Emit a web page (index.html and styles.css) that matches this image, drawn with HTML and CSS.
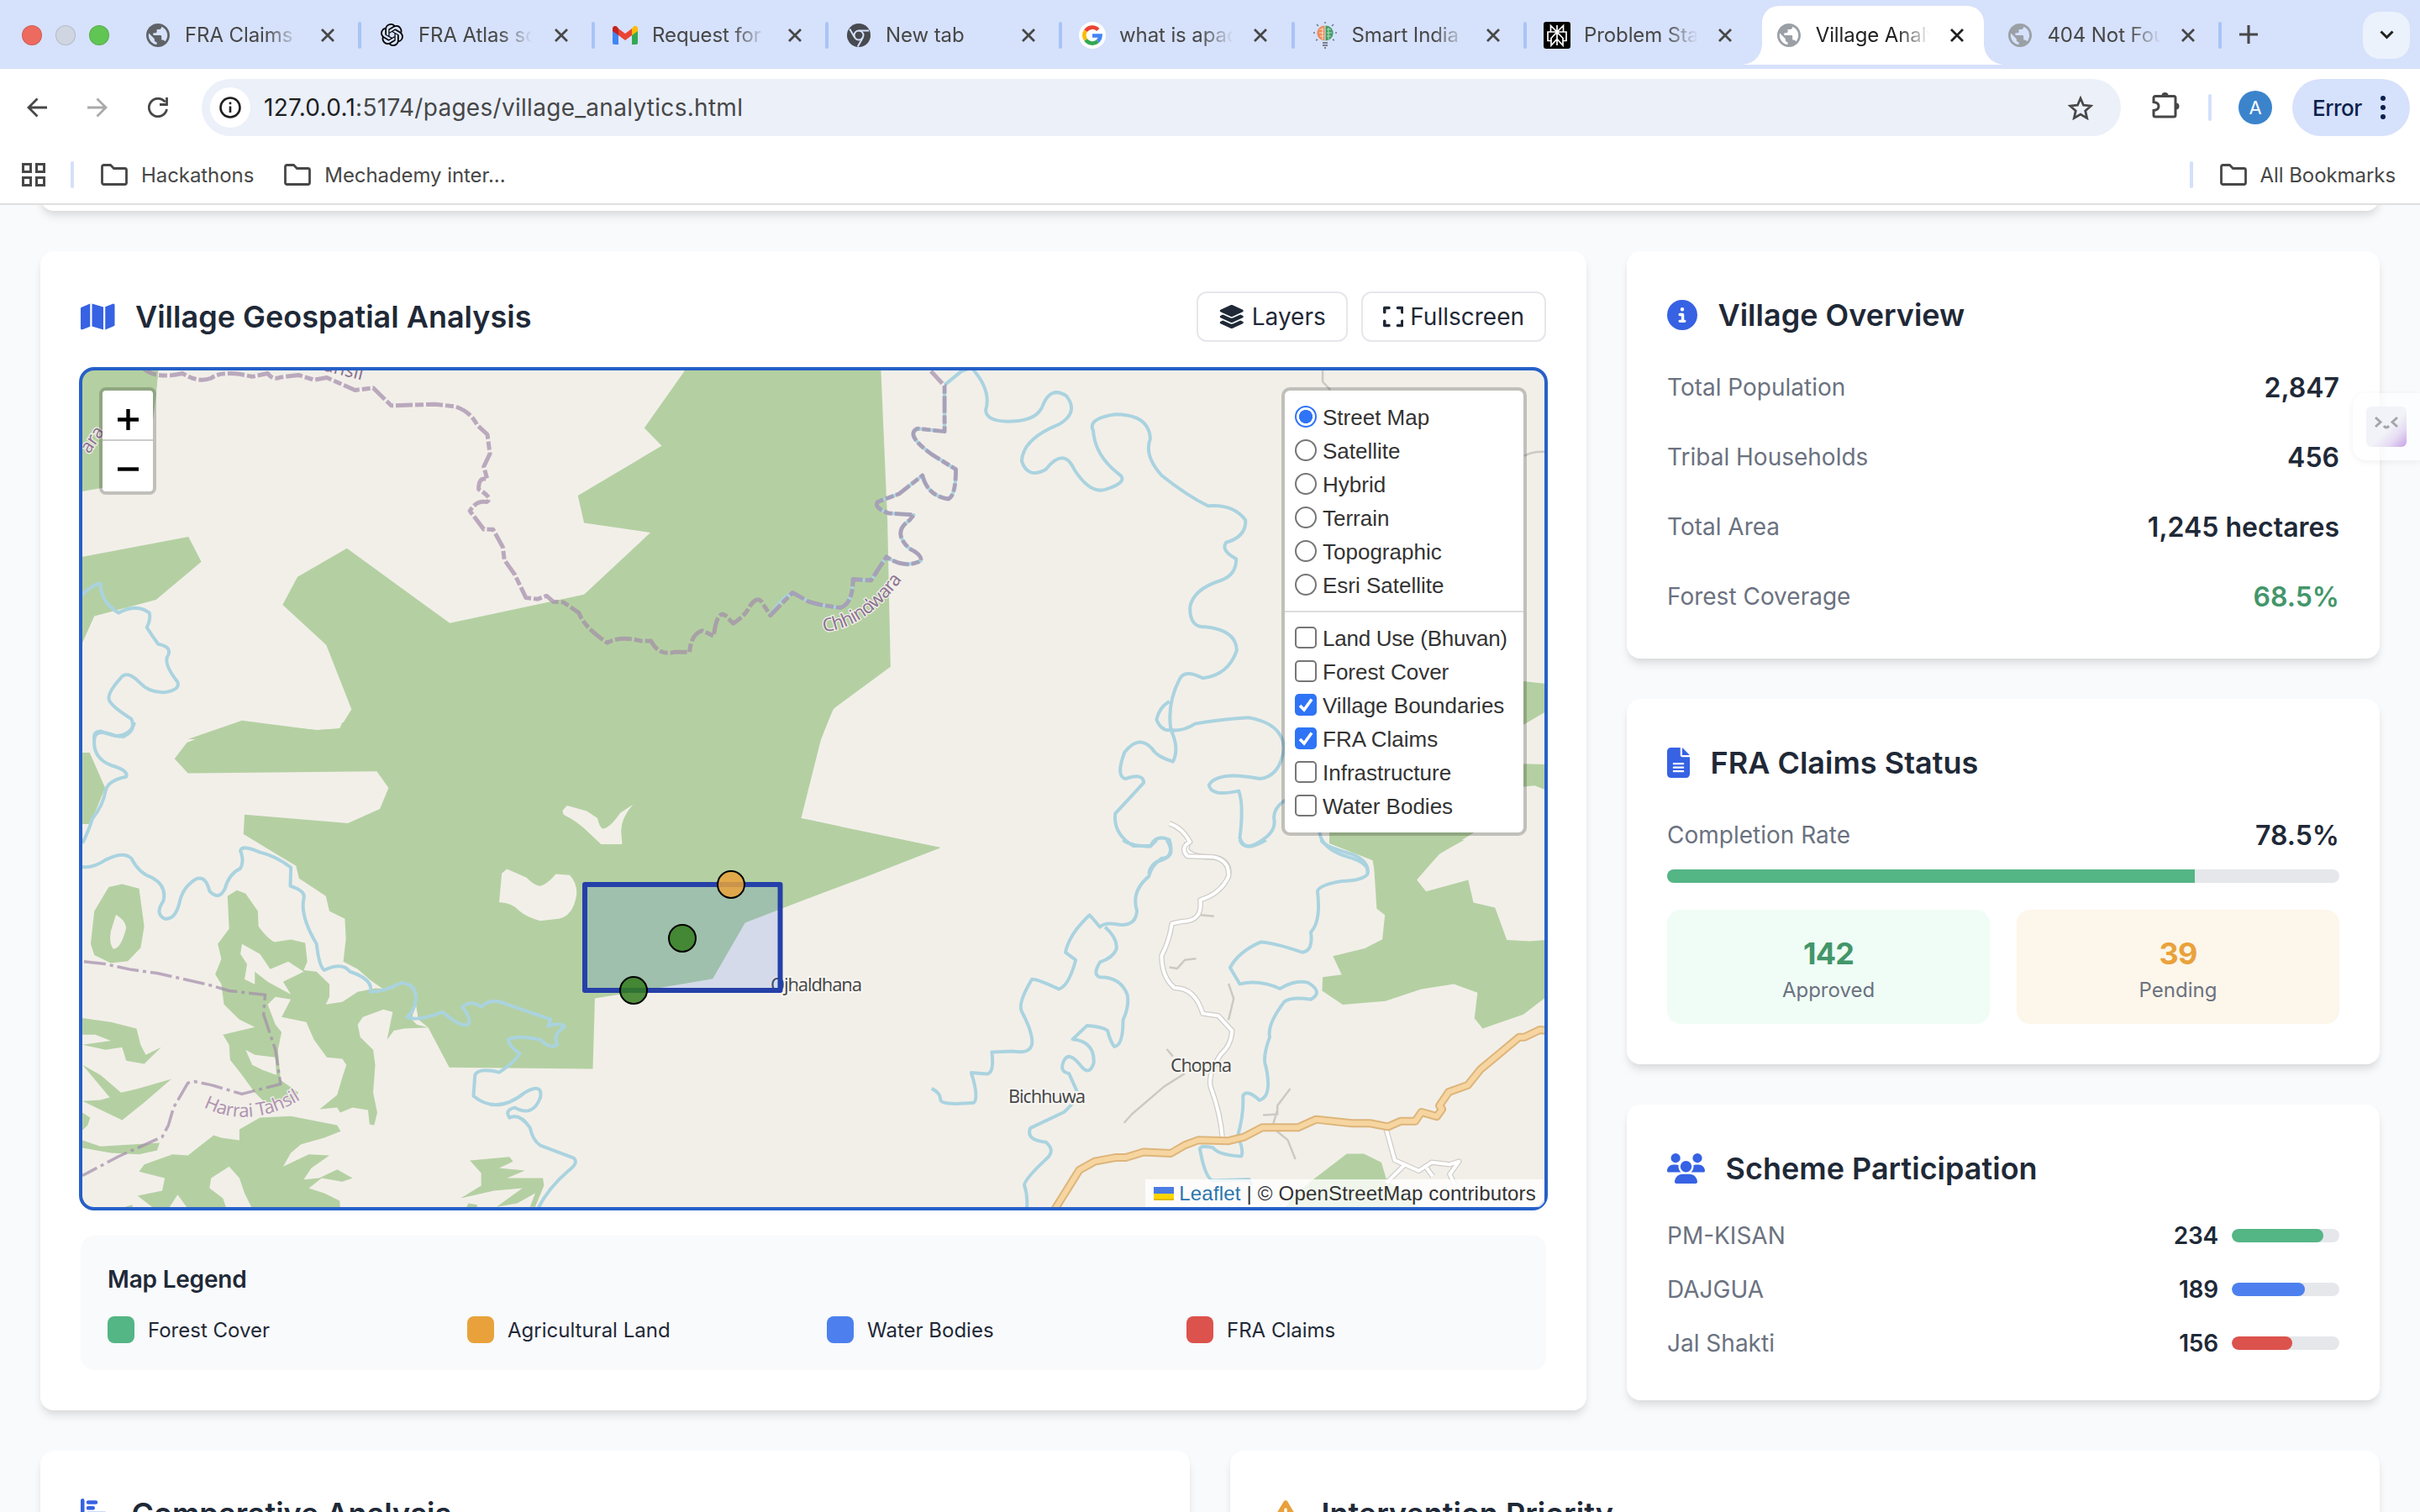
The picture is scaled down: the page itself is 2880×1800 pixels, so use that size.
FILE: index.html
```html
<!DOCTYPE html>
<html lang="en">
<head>
<meta charset="utf-8">
<title>Village Analytics</title>
<link rel="stylesheet" href="styles.css">
</head>
<body>
<svg class="defs" width="0" height="0" aria-hidden="true">
  <symbol id="globe" viewBox="2 2 20 20"><path d="M12 2C6.48 2 2 6.48 2 12s4.48 10 10 10 10-4.48 10-10S17.52 2 12 2zm-1 17.93c-3.95-.49-7-3.85-7-7.93 0-.62.08-1.21.21-1.79L9 15v1c0 1.1.9 2 2 2v1.93zm6.9-2.54c-.26-.81-1-1.39-1.9-1.39h-1v-3c0-.55-.45-1-1-1H8v-2h2c.55 0 1-.45 1-1V7h2c1.1 0 2-.9 2-2v-.41c2.93 1.19 5 4.06 5 7.41 0 2.08-.8 3.97-2.1 5.39z"/></symbol>
  <symbol id="close" viewBox="0 0 16 16"><path d="M1 1 15 15M15 1 1 15" fill="none" stroke="currentColor" stroke-width="2.8"/></symbol>
  <symbol id="folder" viewBox="0 0 32 26"><path d="M1.500 3.500a2 2 0 0 1 2-2h8l4 4h13a2 2 0 0 1 2 2v15a2 2 0 0 1-2 2h-25a2 2 0 0 1-2-2z" fill="none" stroke="currentColor" stroke-width="2.800"/></symbol>
</svg>

<header class="browser">
  <div class="tabstrip">
    <div class="lights"><i class="red"></i><i class="gray"></i><i class="green"></i></div>
    <div class="tab sep"><span class="fav"><svg class="globe" width="28" height="28"><use href="#globe"/></svg></span><span class="name">FRA Claims Status</span><svg class="x"><use href="#close"/></svg></div>
    <div class="tab sep"><span class="fav"><svg width="27" height="27" viewBox="0 0 24 24"><path d="M22.2819 9.8211a5.9847 5.9847 0 0 0-.5157-4.9108 6.0462 6.0462 0 0 0-6.5098-2.9A6.0651 6.0651 0 0 0 4.9807 4.1818a5.9847 5.9847 0 0 0-3.9977 2.9 6.0462 6.0462 0 0 0 .7427 7.0966 5.98 5.98 0 0 0 .511 4.9107 6.051 6.051 0 0 0 6.5146 2.9001A5.9847 5.9847 0 0 0 13.2599 24a6.0557 6.0557 0 0 0 5.7718-4.2058 5.9894 5.9894 0 0 0 3.9977-2.9001 6.0557 6.0557 0 0 0-.7475-7.0729zm-9.022 12.6081a4.4755 4.4755 0 0 1-2.8764-1.0408l.1419-.0804 4.7783-2.7582a.7948.7948 0 0 0 .3927-.6813v-6.7369l2.02 1.1686a.071.071 0 0 1 .038.052v5.5826a4.504 4.504 0 0 1-4.4945 4.4944zm-9.6607-4.1254a4.4708 4.4708 0 0 1-.5346-3.0137l.142.0852 4.783 2.7582a.7712.7712 0 0 0 .7806 0l5.8428-3.3685v2.3324a.0804.0804 0 0 1-.0332.0615L9.74 19.9502a4.4992 4.4992 0 0 1-6.1408-1.6464zM2.3408 7.8956a4.485 4.485 0 0 1 2.3655-1.9728V11.6a.7664.7664 0 0 0 .3879.6765l5.8144 3.3543-2.0201 1.1685a.0757.0757 0 0 1-.071 0l-4.8303-2.7865A4.504 4.504 0 0 1 2.3408 7.872zm16.5963 3.8558L13.1038 8.364 15.1192 7.2a.0757.0757 0 0 1 .071 0l4.8303 2.7913a4.4944 4.4944 0 0 1-.6765 8.1042v-5.6772a.79.79 0 0 0-.407-.667zm2.0107-3.0231l-.142-.0852-4.7735-2.7818a.7759.7759 0 0 0-.7854 0L9.409 9.2297V6.8974a.0662.0662 0 0 1 .0284-.0615l4.8303-2.7866a4.4992 4.4992 0 0 1 6.6802 4.66zM8.3065 12.863l-2.02-1.1638a.0804.0804 0 0 1-.038-.0567V6.0742a4.4992 4.4992 0 0 1 7.3757-3.4537l-.142.0805L8.704 5.459a.7948.7948 0 0 0-.3927.6813zm1.0976-2.3654l2.602-1.4998 2.6069 1.4998v2.9994l-2.5974 1.4997-2.6067-1.4997Z"/></svg></span><span class="name">FRA Atlas solution</span><svg class="x"><use href="#close"/></svg></div>
    <div class="tab sep"><span class="fav"><svg width="30" height="22" viewBox="0 0 30 22"><path d="M0 3v17a2 2 0 0 0 2 2h5V8z" fill="#4285f4"/><path d="M30 3v17a2 2 0 0 1-2 2h-5V8z" fill="#34a853"/><path d="M23 3v8l7-5V3c0-3-3.500-4-5.500-2z" fill="#fbbc04"/><path d="M7 11V3l8 6 8-6v8l-8 6z" fill="#ea4335"/><path d="M0 3v3l7 5V3L5.500 1C3.500-1 0 0 0 3z" fill="#c5221f"/></svg></span><span class="name">Request for access</span><svg class="x"><use href="#close"/></svg></div>
    <div class="tab sep"><span class="fav"><svg width="28" height="28" viewBox="0 0 28 28"><circle cx="14" cy="14" r="14" fill="#474a4f"/><circle cx="14" cy="14" r="5.500" fill="none" stroke="#d6e1fb" stroke-width="2"/><path d="M14 8.500H26M9.200 16.800 3.200 6.500M18.800 16.800 12.800 27.500" stroke="#d6e1fb" stroke-width="2"/></svg></span><span class="name">New tab</span><svg class="x"><use href="#close"/></svg></div>
    <div class="tab sep narrow"><span class="fav"><svg width="32" height="32" viewBox="0 0 32 32"><circle cx="16" cy="16" r="16" fill="#fff"/><g fill="none" stroke-width="4.600"><path d="M8 10.800A9.500 9.500 0 0 1 22.800 9.500" stroke="#ea4335"/><path d="M8.200 21.500A9.500 9.500 0 0 1 8 10.800" stroke="#fbbc04"/><path d="M22.500 23A9.500 9.500 0 0 1 8.200 21.500" stroke="#34a853"/><path d="M16 16.500H25.500A9.500 9.500 0 0 1 22.500 23" stroke="#4285f4"/></g></svg></span><span class="name">what is apache kafka</span><svg class="x"><use href="#close"/></svg></div>
    <div class="tab sep narrow"><span class="fav"><svg width="30" height="32" viewBox="0 0 30 32"><path d="M14.500 4.500v18C8 22 5 17 5.500 12 6 8 10 4.500 14.500 4.500z" fill="#ee8c5a"/><path d="M15.500 4.500v18C22 22 25 17 24.500 12 24 8 20 4.500 15.500 4.500z" fill="#3f9d62"/><path d="M8.500 9h4M8 13h5M9 17h4M12 7v14" stroke="#fbe3d2" stroke-width="1"/><path d="M17 9h5M17 13h6M17 17h5M19 7v14" stroke="#b6dcc4" stroke-width="1"/><path d="M12 25h6M12 28h6M14 31h2" stroke="#777f8c" stroke-width="2"/><path d="M15 0v2M5 3l2 2M25 3l-2 2M1 13h2M27 13h2M4 22l2-1M26 22l-2-1" stroke="#6a7890" stroke-width="1.500"/></svg></span><span class="name">Smart India Hack</span><svg class="x"><use href="#close"/></svg></div>
    <div class="tab narrow2"><span class="fav"><svg width="32" height="32" viewBox="0 0 32 32"><rect width="32" height="32" rx="3"/><path d="M16 4v24M8.500 4.500l7.500 7.500 7.500-7.500V12h3.500v10.500h-4V28L16 20.500 9 28v-5.500H5V12h3.500zM16 12l-7 7.500V26M16 12l7 7.500V26M8.500 12h15" fill="none" stroke="#fff" stroke-width="1.700"/></svg></span><span class="name">Problem Statement</span><svg class="x"><use href="#close"/></svg></div>
    <div class="tab active narrow2"><span class="fav"><svg class="globe light" width="28" height="28"><use href="#globe"/></svg></span><span class="name">Village Analytics</span><svg class="x"><use href="#close"/></svg></div>
    <div class="tab sep narrow2"><span class="fav"><svg class="globe light" width="28" height="28"><use href="#globe"/></svg></span><span class="name">404 Not Found</span><svg class="x"><use href="#close"/></svg></div>
    <svg class="plus" viewBox="0 0 20 20"><path d="M10 0V20M0 10H20" stroke="currentColor" stroke-width="2.800"/></svg>
    <div class="tabsearch"><svg width="17" height="11" viewBox="0 0 17 11"><path d="M1.500 1.500 8.500 8.500 15.500 1.500" fill="none" stroke="#1f1f1f" stroke-width="3"/></svg></div>
  </div>

  <div class="toolbar">
    <svg class="nav back" viewBox="0 0 24 24"><path d="M24 12H2M12.500 1.500 2 12 12.500 22.500" fill="none" stroke="currentColor" stroke-width="2.800"/></svg>
    <svg class="nav fwd" viewBox="0 0 24 24"><path d="M0 12H22M11.500 1.500 22 12 11.500 22.500" fill="none" stroke="currentColor" stroke-width="2.800"/></svg>
    <svg class="nav" viewBox="0 0 24 24"><path d="M22.500 14A10.700 10.700 0 1 1 20.500 5.500M22.500 0V8.500H14" fill="none" stroke="currentColor" stroke-width="2.800"/></svg>
    <div class="omnibox">
      <span class="siteinfo"><svg width="26" height="26" viewBox="0 0 26 26"><circle cx="13" cy="13" r="11.500" fill="none" stroke="#1f1f1f" stroke-width="2.600"/><path d="M13 11.500V19M13 6.500V9.300" stroke="#1f1f1f" stroke-width="2.600"/></svg></span>
      <span class="url"><b>127.0.0.1</b>:5174/pages/village_analytics.html</span>
      <svg class="star" width="30" height="29" viewBox="0 0 30 29"><path d="M15 3l3.500 8.200 8.900.8-6.700 5.900 2 8.700L15 22l-7.700 4.600 2-8.700L2.600 12l8.900-.8z" fill="none" stroke="#474747" stroke-width="2.700"/></svg>
    </div>
    <svg class="ext" width="34" height="34" viewBox="0 0 34 34"><path d="M4 6.500H26a2 2 0 0 1 2 2V29a2 2 0 0 1-2 2H4a2 2 0 0 1-2-2V23.500C7 23 8 20.500 8 18.500S7 14 2 13.500V8.500a2 2 0 0 1 2-2z" fill="none" stroke="#474747" stroke-width="3"/><path d="M11.500 6a4 4 0 0 1 8 0zM28.500 14.500a4 4 0 0 1 0 8z" fill="#474747"/></svg>
    <i class="vbar"></i>
    <span class="avatar">A</span>
    <span class="errorpill">Error<svg width="6" height="28" viewBox="0 0 6 28"><circle cx="3" cy="3" r="3"/><circle cx="3" cy="14" r="3"/><circle cx="3" cy="25" r="3"/></svg></span>
  </div>

  <div class="bookmarks">
    <svg class="apps" width="28" height="28" viewBox="0 0 28 28"><path d="M1.500 1.500h9v9h-9zM17.500 1.500h9v9h-9zM1.500 17.500h9v9h-9zM17.500 17.500h9v9h-9z" fill="none" stroke="#474747" stroke-width="3"/></svg>
    <i class="vbar"></i>
    <svg class="folder"><use href="#folder"/></svg><span class="bm first">Hackathons</span>
    <svg class="folder"><use href="#folder"/></svg><span class="bm">Mechademy inter...</span>
    <i class="vbar right"></i>
    <svg class="folder"><use href="#folder"/></svg><span class="bm all">All Bookmarks</span>
  </div>
</header>

<main class="page">
  <div class="card previous"></div>
  <div class="row top">
    <section class="card mapcard">
      <div class="maphead">
        <h3><svg class="ico" viewBox="0 0 576 512"><path d="M384 476.1L192 421.2V35.9L384 90.8V476.1zm32-1.2V88.4L543.1 37.5c15.8-6.3 32.9 5.3 32.9 22.3V394.6c0 9.8-6 18.6-15.1 22.3L416 474.8zM15.1 95.1L160 37.2V423.6L32.9 474.5C17.1 480.8 0 469.2 0 452.2V117.4c0-9.8 6-18.6 15.1-22.3z"/></svg>Village Geospatial Analysis</h3>
        <button class="btn"><svg viewBox="0 0 576 512"><path d="M264.500 5.200c14.900-6.900 32.100-6.900 47 0l218.600 101c8.500 3.900 13.900 12.400 13.900 21.800s-5.400 17.900-13.900 21.800l-218.600 101c-14.900 6.900-32.100 6.900-47 0L45.900 149.800C37.400 145.800 32 137.300 32 128s5.400-17.900 13.900-21.800L264.500 5.200zM476.900 209.600l53.200 24.600c8.500 3.900 13.900 12.400 13.900 21.800s-5.400 17.900-13.900 21.800l-218.600 101c-14.900 6.900-32.100 6.900-47 0L45.900 277.800C37.400 273.800 32 265.300 32 256s5.400-17.900 13.900-21.800l53.200-24.600 152 70.200c23.400 10.800 50.400 10.800 73.800 0l152-70.200zm-152 198.200l152-70.200 53.200 24.600c8.500 3.900 13.900 12.400 13.900 21.800s-5.400 17.900-13.900 21.800l-218.600 101c-14.900 6.900-32.100 6.900-47 0L45.900 405.800C37.400 401.800 32 393.300 32 384s5.400-17.900 13.900-21.800l53.200-24.600 152 70.200c23.400 10.800 50.400 10.800 73.800 0z"/></svg>Layers</button>
        <button class="btn"><svg viewBox="0 0 448 512"><path d="M32 32C14.300 32 0 46.300 0 64v96c0 17.700 14.300 32 32 32s32-14.300 32-32V96h64c17.700 0 32-14.300 32-32s-14.300-32-32-32H32zM64 352c0-17.700-14.300-32-32-32s-32 14.300-32 32v96c0 17.700 14.300 32 32 32h96c17.700 0 32-14.300 32-32s-14.300-32-32-32H64V352zM320 32c-17.700 0-32 14.300-32 32s14.300 32 32 32h64v64c0 17.700 14.300 32 32 32s32-14.300 32-32V64c0-17.700-14.300-32-32-32H320zM448 352c0-17.700-14.300-32-32-32s-32 14.300-32 32v64H320c-17.700 0-32 14.300-32 32s14.300 32 32 32h96c17.700 0 32-14.300 32-32V352z"/></svg>Fullscreen</button>
      </div>

      <div class="map">
        <svg class="canvas" viewBox="96 439 1744 1000">
          <rect x="96" y="439" width="1744" height="1000" fill="#f2efe9"/>
          <!-- south-west tile -->
          <svg x="40" y="860" width="960" height="940" viewBox="0 0 1568 1568" preserveAspectRatio="none">
            <g class="forest">
              <path fill-rule="evenodd" d="M400 0 298 40 274 72 300 101 667 97 690 130 673 172 611 200 410 183 408 222 510 285 516 310 568 345 575 375 605 390 607 430 602 475 630 490 655 512 680 530 738 530 748 590 767 606 808 685 1087 688 1091 548 1200 530 1320 509 1383 398 1568 325V207L1492 190 1530 35 1543 0H600L595 13 550 15ZM1028 175 1037 165 1075 176 1096 190Q1100 208 1106 211 1120 210 1140 180L1165 163Q1142 190 1142 215L1144 242H1103L1082 222Q1060 198 1030 183ZM920 291 958 308Q975 325 985 325 1000 320 1015 301L1042 303Q1058 320 1055 345 1048 385 1020 390L985 394Q960 388 945 375 930 358 905 357L910 300Z"/>
              <path d="M95 60H109L139 130 110 202H95Z"/>
              <path fill-rule="evenodd" d="M146 327 172 321 205 330 215 405 208 448 183 474 150 478 118 462 111 440 118 375ZM160 382Q178 392 180 408 170 450 155 450 146 440 150 415Z"/>
              <path fill-rule="evenodd" d="M377 345 395 333 412 340 436 375 437 405Q455 430 468 436L500 431 528 438 532 475 525 492 550 495 575 520 575 545 568 560 600 555 630 535 665 528 700 530 735 520 745 545 735 590 745 600 767 606 720 608 700 612 687 630 695 590 698 575 680 570 640 585 630 600 635 625 660 650 664 680 660 735 668 775 662 800 653 798 650 770 620 765 596 775 590 765 556 768 590 740 600 705 608 680 600 668 570 665 545 630 530 595 482 585 500 550 470 545 455 560 470 600 482 615 475 650 480 710 515 735 500 755 450 755 430 735 405 700 382 670 380 640 368 620 430 605 400 590 370 560 365 520 353 500 365 470 358 440 380 410ZM405 440 440 460 460 490 495 475 525 495 485 515 500 540 455 515 430 495 430 520 410 510 415 480 402 460ZM412 650 430 660 470 665 472 700 445 690 425 680Z"/>
              <path d="M95 587 150 595 200 608 208 640 218 660 248 645 215 678 180 672 172 645 140 650 95 640 150 632 120 620 95 620Z"/>
              <path d="M95 680 130 700 170 735 200 728 268 708 215 755 172 790 95 752 130 750 148 745Z"/><path d="M95 775 110 785 105 800 95 810Z"/><path d="M95 830 130 842 245 835 240 850 205 858 150 855 95 845Z"/>
              <path d="M440 785 500 782 590 800 597 812 565 825 520 838 500 855 485 882 535 858 575 860 540 885 525 908 555 905 590 888 620 905 600 912 560 905 535 925 565 935 595 950 596 966H425L410 935 400 905 380 882 345 905 342 925 368 945 375 966H300L280 938 262 966H235L202 940 250 930 255 905 205 892 215 878 270 858 300 860 350 820 365 825 400 830 400 808Z"/>
              <path d="M848 870 925 863 932 872 905 885 955 890 920 905 990 905 992 920 975 962 965 962 975 935 940 955 900 962 950 925 895 930 830 945 870 920 870 895Z"/><path d="M178 962 192 958V966ZM845 955 862 958V966H840Z"/>
            </g>
            <g class="river">
              <path d="M196 0Q190 25 160 27 118 10 118 35 115 70 150 85 185 95 180 108 145 115 140 135 135 165 115 190 105 220 95 240"/>
              <path d="M95 287Q115 290 140 273 175 255 190 270 205 300 230 308 260 325 252 355 235 380 255 390 275 392 283 360 290 325 318 310 335 305 342 335 360 355 372 330 380 300 402 290 410 275 402 255 405 242 440 258 470 265 500 288L499 325Q530 335 525 350 518 385 550 440 555 485 565 492 600 475 615 495 660 510 655 535 680 535 715 517 745 520 743 550 740 575 726 585 745 595 795 575 835 610 846 598 850 585 833 565 850 550 870 565 890 545 920 560L1005 590 1000 603Q1030 595 1032 605 1008 618 1018 640 1005 650 985 630 940 620 922 630 925 645 945 657 935 675 905 695 865 685 858 700L855 742Q900 780 955 735 990 715 985 745 970 785 935 765 915 770 925 785 945 775 965 805 970 830 985 840L1050 865Q1060 875 1040 890 1000 925 980 966"/>
            </g>
            <path class="tahsil" d="M98 475 135 479 190 491 240 498 340 521 380 533 450 541 447 580 470 650 480 718 405 738 345 720 312 713 300 716 272 765 262 800 250 823 165 862 95 900"/>
          </svg>
          <!-- south-east tile -->
          <svg x="960" y="1000" width="960" height="800" viewBox="0 0 1568 1568" preserveAspectRatio="none">
            <g class="forest">
              <path d="M185 0 260 18 120 84 0 137V0Z"/>
              <path d="M1016 0V8L1102 48 1108 160 1124 175 1119 232 1085 253 1023 271 1040 314 1003 320 1002 352 1042 384 1125 376 1195 348 1258 336 1304 356 1298 416 1314 440 1393 407 1440 364V233L1405 236 1361 233 1338 158 1296 146 1286 93 1204 120 1186 93 1230 32 1278 0Z"/>
              <path d="M930 857 960 815 1050 732H1083L1117 752 1127 792 1190 857Z"/>
            </g>
            <g class="river">
              <path d="M615 0Q630 15 668 15L680 0M700 0Q720 40 690 43 670 60 665 85 630 120 642 165 640 200 610 198 580 190 570 203L550 175Q510 220 503 262L523 280Q510 340 490 348 450 325 438 325 410 380 418 400 440 450 438 475 435 500 400 493L360 495Q365 545 350 546L320 543Q335 600 325 613 260 620 260 605 260 590 243 580"/>
              <path d="M580 203Q605 230 602 255 595 275 570 285 555 315 570 320 610 320 623 360 628 385 615 420 615 480 598 482 590 470 585 445 575 435 545 433L517 465Q560 470 558 520 550 550 535 530 510 490 500 515 490 540 510 545L525 585Q525 610 500 635L435 672Q425 700 465 705 485 725 465 745 425 790 423 805 430 830 428 857"/>
              <path d="M842 0Q850 30 893 0M1000 0Q1005 15 1060 33 1095 50 1090 80 1080 95 1040 96 995 105 993 120 1000 190 980 215 985 260 963 262 910 240 883 238 840 260 823 298L842 336Q880 325 920 347 950 325 975 333 1005 355 980 372 940 365 928 378 895 430 900 460 885 510 893 530 905 600 880 607 855 580 848 597 850 640 838 690 850 725 845 738 800 735 790 718 760 710 765 725 775 790 790 795L860 792 865 805"/>
            </g>
            <path class="track" d="M765 175 792 178M705 297 720 300 735 280 757 277M820 335 830 370 820 420M700 488 712 505M617 660 632 640 695 575 735 545M940 580 915 620 915 640 887 642M915 630 905 670 935 700 950 745"/>
            <g id="minor-roads">
              <path class="casing" d="M735 0Q745 5 738 20 745 40 790 40 825 45 820 85 805 125 765 140 770 190 730 190L710 195Q705 235 690 270 690 320 715 345 755 345 770 405L800 410 827 445Q825 480 805 500 780 545 785 575 805 640 808 695M1125 668 1143 747 1190 772 1215 752 1250 757 1268 750 1250 780 1260 805M1163 757 1127 800M1205 765 1217 785"/>
              <path class="road" d="M735 0Q745 5 738 20 745 40 790 40 825 45 820 85 805 125 765 140 770 190 730 190L710 195Q705 235 690 270 690 320 715 345 755 345 770 405L800 410 827 445Q825 480 805 500 780 545 785 575 805 640 808 695M1125 668 1143 747 1190 772 1215 752 1250 757 1268 750 1250 780 1260 805M1163 757 1127 800M1205 765 1217 785"/>
            </g>
            <path class="hw casing2" d="M482 862 530 770 560 750 600 741 620 741 655 728 708 731 735 712 762 700 820 702 850 693 885 671 955 671 990 652 1060 661 1095 661 1130 669 1155 656 1183 656 1195 635 1225 645 1235 628 1230 620 1248 588 1285 572 1310 535 1385 460 1395 460 1425 443 1440 445"/>
            <path class="hw" d="M482 862 530 770 560 750 600 741 620 741 655 728 708 731 735 712 762 700 820 702 850 693 885 671 955 671 990 652 1060 661 1095 661 1130 669 1155 656 1183 656 1195 635 1225 645 1235 628 1230 620 1248 588 1285 572 1310 535 1385 460 1395 460 1425 443 1440 445"/>
          </svg>
          <!-- north-west tile -->
          <svg x="40" y="280" width="960" height="600" viewBox="0 0 1568 1568" preserveAspectRatio="none">
            <g class="forest">
              <path d="M90 410H243L238 500 230 600 200 760 130 787 90 798Z"/>
              <path d="M90 1002 301 938 326 1016 238 1134 118 1185 90 1285Z"/>
              <path d="M1268 410 1264 425 1187 600 1221 655 1058 810 1070 895 1199 925 1070 1118 809 1207 609 974 513 1063 484 1150 569 1275 618 1475 595 1534 550 1540 405 1510 300 1568H1530L1553 1480 1568 1440V410Z"/>
            </g>
            <path class="river" d="M90 1125Q115 1085 130 1083 130 1140 165 1175 200 1145 225 1175 228 1195 220 1220 232 1250 242 1272 268 1280 262 1305 250 1330 280 1390 285 1415 255 1422 225 1425 205 1390 180 1350 168 1380 140 1430 148 1450 155 1470 190 1505 200 1540 175 1560 155 1560 130 1543 115 1545 118 1568M1432 1183Q1450 1135 1475 1112L1510 1143 1540 1145 1568 1160"/>
            <path class="district" d="M210 410Q235 450 290 430 320 460 345 445 360 425 400 432L425 440 455 430Q465 452 480 442L515 435 545 450 570 443 625 482 660 475 695 530 780 526 820 533Q850 550 862 590L882 620 887 680 875 720 882 760Q865 750 865 790 895 820 880 830 860 825 848 858L875 915 893 915 912 970 915 1010 935 1055 957 1128 980 1132 997 1122 1010 1140 1030 1142 1060 1175Q1070 1220 1115 1268 1140 1245 1180 1262L1200 1262Q1215 1310 1245 1297L1275 1297Q1278 1240 1300 1230L1322 1247Q1328 1165 1345 1183L1360 1208Q1385 1180 1390 1160 1405 1120 1415 1140L1432 1183 1475 1112 1510 1143 1540 1145 1568 1160"/>
          </svg>
          <!-- north-east tile -->
          <svg x="960" y="280" width="960" height="760" viewBox="0 0 1568 1568" preserveAspectRatio="none">
            <g class="forest">
              <path d="M0 320H144L157 700 163 1060 50 1165 27 1240 0 1370Z"/><path d="M0 1435 260 1504 120 1568H0Z"/>
              <path d="M1390 1095 1440 1102V1168L1390 1205ZM1390 1298 1440 1300V1364L1415 1352 1390 1355ZM1016 1465V1493L1100 1535 1105 1568H1195L1230 1520 1300 1465Z"/>
            </g>
            <g class="river">
              <path d="M268 368 300 335 320 325Q360 380 348 430 350 460 400 457 450 455 460 415 475 370 505 395 530 435 490 465 420 500 418 555 430 600 465 575 500 520 520 575 550 635 580 625 630 605 605 585 560 540 557 480 545 450 600 440 665 440 668 500 655 540 690 590 740 640 780 665 830 660 853 700 855 740 815 755 805 775 835 795 835 835 805 848 750 870 745 915 745 965 775 962 835 970 836 1020 820 1080 770 1088 735 1065 725 1090 700 1150 708 1215 690 1220 680 1190 685 1160 705 1145"/>
              <path d="M708 1215Q730 1220 755 1200 800 1190 860 1185 925 1200 928 1260 920 1330 880 1335 800 1315 782 1350 785 1380 840 1365 850 1400 842 1480 850 1515 880 1490 915 1465 908 1430 910 1400 935 1385M708 1215Q725 1260 712 1293 680 1280 672 1262 645 1225 618 1270 600 1330 620 1335 655 1320 655 1345 630 1380 600 1420 595 1470 635 1500L668 1500Q680 1470 705 1485 715 1525 690 1535 670 1540 665 1568M997 1465Q1000 1510 1060 1530 1095 1545 1090 1568"/>
              <path d="M0 898Q20 908 65 915 90 905 90 845L125 848 155 790Q190 820 222 800 225 785 200 770 165 730 200 700L208 687 160 683Q130 670 138 655L180 635 225 590Q235 640 275 648 290 640 290 575L245 540Q190 490 215 475L268 482V370"/>
            </g>
            <path class="track" d="M1003 325V360L1018 380M1395 542Q1410 530 1440 532"/>
            <path class="casing" d="M705 1445Q730 1455 745 1490 725 1505 740 1525L790 1527Q820 1535 820 1568"/>
            <path class="road" d="M705 1445Q730 1455 745 1490 725 1505 740 1525L790 1527Q820 1535 820 1568"/>
            <path class="district" d="M0 898Q20 908 65 915 90 905 90 845L125 848 155 790Q190 820 222 800 225 785 200 770 165 730 200 700L208 687 160 683Q130 670 138 655L180 635 225 590Q235 640 275 648 290 640 290 575L245 540Q190 490 215 475L268 482V370L235 325"/>
          </svg>
          <g class="place">
            <text x="1393" y="1276" textLength="73">Chopna</text>
            <text x="1200" y="1313" textLength="92">Bichhuwa</text>
            <text x="917" y="1180" textLength="109">Ojhaldhana</text>
          </g>
          <g class="area">
            <path id="arc1" d="M980 752Q1032 748 1078 684" fill="none" stroke="none"/>
            <path id="arc2" d="M242 1318Q300 1347 364 1305" fill="none" stroke="none"/>
            <text><textPath href="#arc1" textLength="116">Chhindwara</textPath></text>
            <text class="soft"><textPath href="#arc2" textLength="122">Harrai Tahsil</textPath></text>
            <text transform="translate(106 541) rotate(-55)">ara</text>
            <text transform="translate(384 441) rotate(14)">ahsil</text>
          </g>
          <rect x="696" y="1053" width="232.500" height="126" fill="#2563eb" fill-opacity=".15" stroke="#2540a8" stroke-width="6" stroke-linejoin="round"/>
          <g stroke="#000" stroke-width="2" fill-opacity=".85"><circle cx="812" cy="1117" r="16" fill="#347d1e"/><circle cx="754" cy="1179" r="16" fill="#347d1e"/><circle cx="870" cy="1053" r="16" fill="#e9a23b"/></g>
        </svg>

        <div class="zoomctl"><span><svg viewBox="0 0 24 24"><path d="M12 0V24M0 12H24" stroke="#000" stroke-width="4.200"/></svg></span><span><svg viewBox="0 0 24 24"><path d="M0 12H24" stroke="#000" stroke-width="4.200"/></svg></span></div>

        <div class="layers">
          <div class="group">
            <label><i class="radio on"></i>Street Map</label>
            <label><i class="radio"></i>Satellite</label>
            <label><i class="radio"></i>Hybrid</label>
            <label><i class="radio"></i>Terrain</label>
            <label><i class="radio"></i>Topographic</label>
            <label><i class="radio"></i>Esri Satellite</label>
          </div>
          <div class="group">
            <label class="tight"><i class="check"></i>Land Use (Bhuvan)</label>
            <label><i class="check"></i>Forest Cover</label>
            <label><i class="check on"><svg viewBox="0 0 26 26"><path d="M6 14 11 19 20 6.500" fill="none" stroke="#fff" stroke-width="3.600"/></svg></i>Village Boundaries</label>
            <label><i class="check on"><svg viewBox="0 0 26 26"><path d="M6 14 11 19 20 6.500" fill="none" stroke="#fff" stroke-width="3.600"/></svg></i>FRA Claims</label>
            <label><i class="check"></i>Infrastructure</label>
            <label><i class="check"></i>Water Bodies</label>
          </div>
        </div>
        <div class="attribution"><svg width="24" height="16" viewBox="0 0 12 8"><path fill="#4c7be1" d="M0 0h12v4H0z"/><path fill="#ffd500" d="M0 4h12v3H0z"/><path fill="#e0bc00" d="M0 7h12v1H0z"/></svg><span><a>Leaflet</a> | © OpenStreetMap contributors</span></div>
      </div>

      <div class="legend">
        <h4>Map Legend</h4>
        <div class="keys">
          <span><i class="bg-green"></i>Forest Cover</span>
          <span><i class="bg-amber"></i>Agricultural Land</span>
          <span><i class="bg-blue"></i>Water Bodies</span>
          <span><i class="bg-red"></i>FRA Claims</span>
        </div>
      </div>
    </section>

    <aside class="side">
      <section class="card overview">
        <h3><svg class="ico" viewBox="0 0 512 512"><path d="M256 512A256 256 0 1 0 256 0a256 256 0 1 0 0 512zM216 336h24V272H216c-13.300 0-24-10.700-24-24s10.700-24 24-24h48c13.300 0 24 10.700 24 24v88h8c13.300 0 24 10.700 24 24s-10.700 24-24 24H216c-13.300 0-24-10.700-24-24s10.700-24 24-24zm40-208a32 32 0 1 1 0 64 32 32 0 1 1 0-64z"/></svg>Village Overview</h3>
        <div class="stat"><span>Total Population</span><b>2,847</b></div>
        <div class="stat"><span>Tribal Households</span><b>456</b></div>
        <div class="stat"><span>Total Area</span><b>1,245 hectares</b></div>
        <div class="stat"><span>Forest Coverage</span><b class="good">68.5%</b></div>
      </section>
      <section class="card claims">
        <h3><svg class="ico" viewBox="0 0 384 512"><path d="M64 0C28.700 0 0 28.700 0 64V448c0 35.300 28.700 64 64 64H320c35.300 0 64-28.700 64-64V160H256c-17.700 0-32-14.300-32-32V0H64zM256 0V128H384L256 0zM112 256H272c8.800 0 16 7.200 16 16s-7.200 16-16 16H112c-8.800 0-16-7.200-16-16s7.200-16 16-16zm0 64H272c8.800 0 16 7.200 16 16s-7.200 16-16 16H112c-8.800 0-16-7.200-16-16s7.200-16 16-16zm0 64H272c8.800 0 16 7.200 16 16s-7.200 16-16 16H112c-8.800 0-16-7.200-16-16s7.200-16 16-16z"/></svg>FRA Claims Status</h3>
        <div class="stat"><span>Completion Rate</span><b>78.5%</b></div>
        <div class="progress"><i class="bg-green" style="width:78.5%"></i></div>
        <div class="pair">
          <div class="tile approved"><b>142</b><span>Approved</span></div>
          <div class="tile pending"><b>39</b><span>Pending</span></div>
        </div>
      </section>
      <section class="card schemes">
        <h3><svg class="ico" viewBox="0 0 640 512"><path d="M144 0a80 80 0 1 1 0 160A80 80 0 1 1 144 0zM512 0a80 80 0 1 1 0 160A80 80 0 1 1 512 0zM0 298.700C0 239.800 47.800 192 106.700 192h42.700c15.900 0 31 3.500 44.600 9.700c-1.300 7.200-1.900 14.700-1.900 22.300c0 38.200 16.800 72.500 43.300 96c-.2 0-.4 0-.7 0H21.300C9.600 320 0 310.400 0 298.700zM405.300 320c-.2 0-.4 0-.7 0c26.600-23.500 43.300-57.800 43.300-96c0-7.600-.7-15-1.900-22.300c13.600-6.300 28.700-9.700 44.600-9.700h42.700C592.200 192 640 239.800 640 298.700c0 11.800-9.600 21.300-21.300 21.300H405.300zM224 224a96 96 0 1 1 192 0 96 96 0 1 1 -192 0zM128 485.300C128 411.700 187.700 352 261.300 352H378.700C452.300 352 512 411.700 512 485.300c0 14.700-11.900 26.700-26.700 26.700H154.700c-14.700 0-26.700-11.900-26.700-26.700z"/></svg>Scheme Participation</h3>
        <div class="scheme"><span>PM-KISAN</span><b>234</b><div class="mini"><i class="bg-green" style="width:85%"></i></div></div>
        <div class="scheme"><span>DAJGUA</span><b>189</b><div class="mini"><i class="bg-blue" style="width:68%"></i></div></div>
        <div class="scheme"><span>Jal Shakti</span><b>156</b><div class="mini"><i class="bg-red" style="width:56%"></i></div></div>
      </section>
    </aside>
  </div>

  <div class="row bottom">
    <section class="card"><h3><svg class="ico" viewBox="0 0 512 512"><path d="M32 64V400a48 48 0 0 0 48 48H480M128 96H256M128 192H210M128 288H410" transform="translate(0 -32)" fill="none" stroke="currentColor" stroke-width="64" stroke-linecap="round"/></svg>Comparative Analysis</h3></section>
    <section class="card"><h3><svg class="ico warn" viewBox="0 0 512 512"><path d="M256 32c14.200 0 27.300 7.500 34.500 19.800l216 368c7.300 12.400 7.300 27.700 .2 40.100S486.300 480 472 480H40c-14.300 0-27.600-7.700-34.700-20.100s-7-27.800 .2-40.100l216-368C228.700 39.500 241.800 32 256 32zm0 128c-13.300 0-24 10.700-24 24V296c0 13.300 10.700 24 24 24s24-10.700 24-24V184c0-13.300-10.700-24-24-24zm32 224a32 32 0 1 0 -64 0 32 32 0 1 0 64 0z"/></svg>Intervention Priority</h3></section>
  </div>
</main>

<div class="assistant"><svg width="48" height="48" viewBox="0 0 48 48"><path d="M11 13l6 5.500-6 5.500M37 13l-6 5.500 6 5.500M21 23q3 4 6 0" fill="none" stroke="#a5a6ad" stroke-width="3"/></svg></div>
</body>
</html>
```
FILE: styles.css
```css
* { box-sizing: border-box; }
html, body { margin: 0; width: 2880px; height: 1800px; overflow: hidden; }
body { background: #f9fafc; font-family: Inter, "Noto Sans", sans-serif; color: #1f2937; position: relative; }
svg { display: block; flex: none; }
i { display: block; flex: none; }
.defs { position: absolute; }

/* browser chrome */
.browser { height: 244px; background: #fff; border-bottom: 2px solid #dfdfdf; color: #474747; position: relative; z-index: 1; }
.tabstrip { height: 82px; background: #d6e1fb; display: flex; align-items: center; padding-top: 1px; }
.lights { width: 150px; flex: none; display: flex; gap: 16px; padding-left: 26px; }
.lights i { width: 24px; height: 24px; border-radius: 50%; border: 1px solid rgba(0,0,0,.12); }
.lights .red { background: #ed6a5e; }
.lights .gray { background: #cfd5e1; }
.lights .green { background: #61c554; }
.tab { width: 278px; height: 68px; flex: none; display: flex; align-items: center; padding-left: 22px; position: relative; }
.tab.narrow { width: 276.500px; }
.tab.narrow2 { width: 275.700px; }
.tab.sep::after { content: ""; position: absolute; right: -2px; top: 18px; width: 4px; height: 32px; border-radius: 2px; background: #a8c4f7; }
.fav { width: 32px; display: flex; justify-content: center; }
.globe { fill: #5f6368; }
.globe.light { fill: #9aa0a6; }
.name { width: 134px; margin-left: 16px; font-size: 24px; letter-spacing: -.1px; white-space: nowrap; overflow: hidden; -webkit-mask-image: linear-gradient(90deg, #000 96px, transparent 136px); }
.tab .x { width: 16px; height: 16px; margin-left: 28px; color: #474747; }
.narrow .x, .narrow2 .x { margin-left: 26px; }
.tab.active { color: #1f1f1f; }
.tab.active::before { content: ""; position: absolute; left: 6px; top: -1px; width: 264px; height: 70px; background: #fff; border-radius: 20px 20px 0 0; }
.tab.active::after { content: ""; position: absolute; left: -18px; top: 45px; width: 312px; height: 24px; background: radial-gradient(circle at 0 0, transparent 23.500px, #fff 24px) 0 0/24px 24px no-repeat, radial-gradient(circle at 100% 0, transparent 23.500px, #fff 24px) 100% 0/24px 24px no-repeat; }
.tab.active > * { position: relative; z-index: 1; }
.tab.active .x { color: #1f1f1f; }
.plus { width: 22px; height: 22px; margin-left: 23px; margin-top: -2px; }
.tabsearch { width: 56px; height: 56px; border-radius: 20px; background: #ebf2fc; margin-left: auto; margin-right: 12px; display: flex; align-items: center; justify-content: center; }

.toolbar { height: 92px; display: flex; align-items: center; padding: 0 12px 0 32px; background: #fff; }
.nav { width: 24px; height: 24px; margin-right: 48px; }
.fwd { color: #aaa; }
.omnibox { width: 2284px; height: 68px; margin-left: -8px; border-radius: 34px; background: #ebf0f9; display: flex; align-items: center; padding: 0 33px 0 10px; }
.siteinfo { width: 48px; height: 48px; border-radius: 50%; background: #fff; display: flex; align-items: center; justify-content: center; }
.url { font-size: 28px; margin-left: 16px; width: 1400px; letter-spacing: .29px; }
.url b { font-weight: 400; color: #1f1f1f; }
.star { margin-left: auto; }
.ext { margin: -6px 0 0 37px; }
.toolbar .vbar { margin-left: 33px; }
.vbar { width: 4px; height: 32px; border-radius: 2px; background: #d3e0fb; }
.avatar { width: 40px; height: 40px; border-radius: 50%; background: #3b84cc; color: #fff; font-size: 22px; display: flex; align-items: center; justify-content: center; margin-left: 32px; }
.errorpill { width: 140px; height: 68px; border-radius: 34px; background: #d6e1fb; color: #0b1f4d; font-size: 26px; font-weight: 500; letter-spacing: -.5px; display: flex; align-items: center; justify-content: space-between; padding: 0 29px 0 24px; margin-left: auto; }
.errorpill svg { fill: #0b1f4d; }

.bookmarks { height: 68px; display: flex; align-items: center; padding-left: 26px; }
.bookmarks .vbar { margin: 0 32px 0 30px; }
.folder { width: 32px; height: 26px; }
.bm { font-size: 24px; margin-left: 16px; letter-spacing: -.07px; }
.bm.first { margin-right: 36px; }
.bookmarks .vbar.right { margin-left: auto; }
.bm.all { margin-right: 29px; }

/* page */
.page { padding: 0 48px; height: 1556px; }
.card { background: #fff; border-radius: 16px; box-shadow: 0 8px 12px -2px rgba(0,0,0,.1), 0 4px 8px -2px rgba(0,0,0,.05); }
.previous { height: 87px; margin-top: -80px; }
.row { display: flex; gap: 48px; margin-top: 48px; }
.mapcard { width: 1840px; height: 1380px; padding: 48px; }
.side { flex: 1; display: flex; flex-direction: column; gap: 48px; }
h3 { margin: 0; font-size: 36px; line-height: 56px; font-weight: 600; display: flex; align-items: center; letter-spacing: 0; white-space: nowrap; }
.ico { height: 36px; width: auto; margin-right: 24.5px; fill: #3662e3; color: #3662e3; }
.ico.warn { fill: #e9a13b; }

.maphead { display: flex; align-items: center; height: 60px; margin-bottom: 32px; }
.maphead h3 { flex: 1; }
.btn { height: 60px; border: 2px solid #e5e7eb; border-radius: 12px; background: #fff; font: 400 28px Inter, sans-serif; color: #1f2937; display: flex; align-items: center; padding: 0 24px; margin-left: 16px; }
.btn svg { height: 28px; margin-right: 8px; fill: #1f2937; }

.map { position: relative; height: 1000px; border-radius: 16px; outline: 4px solid #2660c8; outline-offset: -2px; overflow: hidden; font-family: "Liberation Sans", Arial, sans-serif; }
.canvas { width: 1744px; height: 1000px; }
.canvas path { vector-effect: non-scaling-stroke; stroke-linejoin: round; }
.forest { fill: #b4d0a2; }
.river { fill: none; stroke: #aad3df; stroke-width: 4; }
.district { fill: none; stroke: #a38caa; stroke-opacity: .7; stroke-width: 5; stroke-dasharray: 20 3 10 3; }
.tahsil { fill: none; stroke: #a38caa; stroke-opacity: .7; stroke-width: 3.5; stroke-dasharray: 26 5 4 5; }
.track { fill: none; stroke: #ccc9c5; stroke-width: 2.5; }
.casing { fill: none; stroke: #cfccc8; stroke-width: 6.5; }
.road { fill: none; stroke: #fff; stroke-width: 4; }
.hw { fill: none; stroke: #f6d5a0; stroke-width: 6; }
.casing2 { stroke: #ddb57a; stroke-width: 10; }
.place { font: 22px "Noto Sans", sans-serif; fill: #4a4a4a; stroke: #f7f5f1; stroke-width: 4px; paint-order: stroke; }
.area { font: 22px "Noto Sans", sans-serif; fill: #8d7590; stroke: #f3f0ec; stroke-width: 2.5px; paint-order: stroke; }
.area .soft { fill: #b096b0; }

.zoomctl { position: absolute; left: 22px; top: 22px; width: 68px; height: 128px; border: 4px solid rgba(0,0,0,.2); border-radius: 8px; background: #fff; background-clip: padding-box; }
.zoomctl span { height: 60px; display: flex; align-items: center; justify-content: center; }
.zoomctl span:first-child { border-bottom: 2px solid #ccc; padding-top: 12px; padding-bottom: 2px; }
.zoomctl span + span { padding-top: 7px; padding-left: 1px; }
.zoomctl svg { width: 25px; height: 25px; }

.layers { position: absolute; left: 1429px; top: 22px; width: 292px; height: 534px; border: 4px solid rgba(0,0,0,.2); border-radius: 10px; background: #fff; background-clip: padding-box; padding: 12px 0 0; font-size: 26px; color: #333; }
.group { padding-left: 12px; height: 250px; }
.group + .group { border-top: 2px solid #ddd; height: 260px; padding-top: 11px; }
.layers label { display: flex; align-items: center; height: 40px; line-height: 40px; white-space: nowrap; }
.layers .tight { letter-spacing: -.25px; }
.radio, .check { width: 26px; height: 26px; border: 2px solid #767676; background: #fff; margin: -2px 7px 0 0; }
.radio { border-radius: 50%; }
.radio.on { border-color: #2f74f6; background: radial-gradient(circle, #2f74f6 7.800px, #fff 8.300px); }
.check { border-radius: 5px; }
.check.on { border: 0; background: #2f74f6; }
.attribution { position: absolute; right: 2px; bottom: 2px; height: 33px; padding: 0 10px; background: rgba(255,255,255,.8); display: flex; align-items: center; gap: 6px; font-size: 24px; letter-spacing: .19px; color: #333; white-space: nowrap; }
.attribution a { color: #2a75ad; }

.legend { margin-top: 32px; height: 160px; background: #f9fafc; border-radius: 16px; padding: 32px; }
h4 { margin: 0 0 24px; font-size: 28px; line-height: 40px; font-weight: 600; letter-spacing: -.2px; }
.keys { display: grid; grid-template-columns: repeat(4, 1fr); gap: 32px; }
.keys span { display: flex; align-items: center; gap: 16px; font-size: 24px; height: 32px; }
.keys i { width: 32px; height: 32px; border-radius: 8px; }
.bg-green { background: #54b585; }
.bg-amber { background: #e9a23b; }
.bg-blue { background: #4d80ee; }
.bg-red { background: #dc524c; }

.side .card { padding: 48px; }
.overview { height: 485px; }
.overview h3 { margin-bottom: 30px; }
.overview .stat { margin-bottom: 27px; }
.stat { display: flex; justify-content: space-between; align-items: center; height: 56px; font-size: 28px; color: #6b7280; }
.stat b { font-size: 32px; font-weight: 600; color: #1f2937; letter-spacing: 0; }
.stat b.good { color: #43966a; }
.claims { height: 435px; }
.claims h3 { margin-bottom: 30px; }
.progress { height: 16px; border-radius: 8px; background: #e5e7eb; overflow: hidden; margin-top: 13px; }
.progress i, .mini i { height: 100%; }
.pair { display: flex; gap: 32px; margin-top: 32px; }
.tile { flex: 1; height: 136px; border-radius: 16px; text-align: center; padding-top: 31px; }
.tile b { display: block; font-size: 36px; line-height: 42px; font-weight: 700; letter-spacing: -.8px; }
.tile span { display: block; font-size: 24px; line-height: 45px; color: #6b7280; }
.approved { background: #f0fdf6; }
.approved b { color: #43966a; }
.pending { background: #fdf6ea; }
.pending b { color: #e9a23b; }
.schemes { height: 352px; }
.schemes h3 { margin-bottom: 20px; }
.scheme { display: flex; align-items: center; height: 64px; font-size: 28px; color: #6b7280; }
.scheme span { flex: 1; }
.scheme b { font-weight: 600; color: #1f2937; margin-right: 16px; letter-spacing: -.2px; }
.mini { width: 128px; height: 16px; border-radius: 8px; background: #e5e7eb; overflow: hidden; }
.mini i { border-radius: 8px; }
.bottom { height: 73px; overflow: hidden; margin-left: -48px; margin-right: -48px; padding: 0 48px; }
.bottom .card { flex: 1; height: 160px; padding: 47px 48px; }

.assistant { position: absolute; left: 2800px; top: 468px; width: 80px; height: 80px; border-radius: 16px 0 0 16px; background: rgba(255,255,255,.55); box-shadow: 0 2px 8px rgba(0,0,0,.06); padding: 16px; }
.assistant svg { border-radius: 6px; background: linear-gradient(135deg, #f1f3f8 55%, #e6dcf3 75%, #c6a2e8); }
```
